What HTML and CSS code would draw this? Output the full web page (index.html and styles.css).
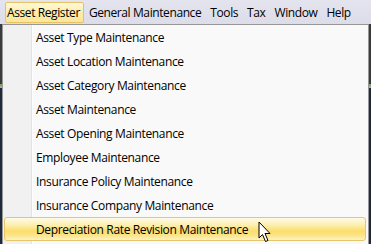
FILE: index.html
```html
<!DOCTYPE html>
<html>
<head>
<meta charset="utf-8">
<link rel="stylesheet" href="styles.css">
</head>
<body>
<div class="menubar">
  <span class="top-item active">Asset Register</span>
  <span class="top-item">General Maintenance</span>
  <span class="top-item">Tools</span>
  <span class="top-item">Tax</span>
  <span class="top-item">Window</span>
  <span class="top-item">Help</span>
</div>
<div class="backdrop"></div>
<div class="dropdown">
  <div class="gutter"></div>
  <ul class="items">
    <li class="item">Asset Type Maintenance</li>
    <li class="item">Asset Location Maintenance</li>
    <li class="item">Asset Category Maintenance</li>
    <li class="item">Asset Maintenance</li>
    <li class="item">Asset Opening Maintenance</li>
    <li class="item">Employee Maintenance</li>
    <li class="item">Insurance Policy Maintenance</li>
    <li class="item">Insurance Company Maintenance</li>
    <li class="item hover">Depreciation Rate Revision Maintenance</li>
  </ul>
</div>
<svg class="cursor" width="14" height="22" viewBox="0 0 14 22">
  <path d="M1 1 L1 17 L4.5 13.5 L7.5 20.5 L10 19.5 L7 12.5 L12 12.5 Z" fill="#fff" stroke="#000" stroke-width="1" stroke-linejoin="miter"/>
</svg>
</body>
</html>
```
FILE: styles.css
```css
html, body {
  margin: 0;
  padding: 0;
}
body {
  width: 371px;
  height: 244px;
  overflow: hidden;
  position: relative;
  background: #2d2f33;
  font-family: "Open Sans", "Noto Sans", sans-serif;
  font-size: 12px;
  color: #000;
}
.menubar {
  height: 24px;
  display: flex;
  align-items: center;
  padding-left: 5px;
  background: linear-gradient(#e3e4ee, #dcdde9);
  box-sizing: border-box;
}
.top-item {
  padding: 0 3px 0 1px;
  height: 21px;
  line-height: 20px;
  margin-right: 3px;
  border: 1px solid transparent;
  box-sizing: border-box;
  white-space: nowrap;
  letter-spacing: -0.4px;
}
.top-item.active {
  border-color: #e5c365;
  border-radius: 2px;
  background: linear-gradient(#fff9da, #fdeca8 50%, #fde49a);
  margin-top: 1px;
}
.backdrop {
  height: 220px;
  background: linear-gradient(#3a3b3d 0, #3a3b3d 60px, #7ea24c 60px, #7ea24c 62px, #a9aab0 62px, #a9aab0 64px, #1f2b3d 64px);
}
.dropdown {
  position: absolute;
  left: 2px;
  top: 24px;
  width: 367px;
  height: 224px;
  box-sizing: border-box;
  border: 1px solid #979797;
  background: #f9f9f9;
  display: flex;
}
.gutter {
  position: absolute;
  left: 0;
  top: 0;
  bottom: 0;
  width: 28px;
  background: #f1f1f1;
  border-right: 1px solid #e2e3e3;
  box-shadow: 1px 0 0 #fff;
}
.items {
  list-style: none;
  margin: 0;
  padding: 0;
  flex: 1;
  position: relative;
}
.item {
  height: 24px;
  line-height: 23px;
  padding-left: 31px;
  margin: 0 2px 0 1px;
  border: 1px solid transparent;
  box-sizing: border-box;
  white-space: nowrap;
  letter-spacing: -0.35px;
}
.item.hover {
  border-color: #e6c66b;
  border-radius: 3px;
  background: linear-gradient(#fefbe6 0%, #fdf0b4 30%, #fbdd6a 60%, #fce48c 80%, #fdf3c4 100%);
}
.cursor {
  position: absolute;
  left: 258px;
  top: 221px;
}
```
